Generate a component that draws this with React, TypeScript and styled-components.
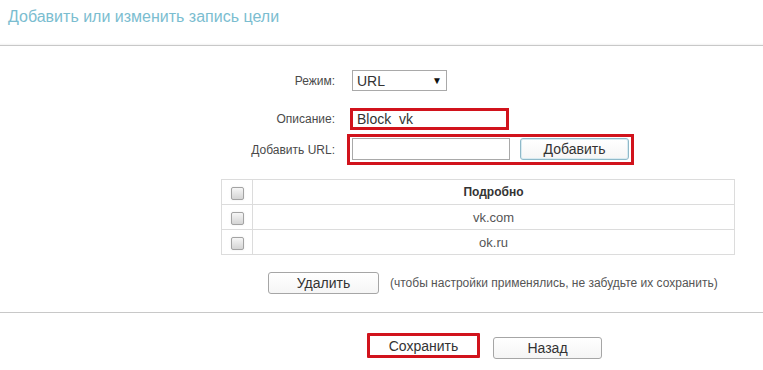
import styled, { createGlobalStyle } from 'styled-components';

const GlobalStyle = createGlobalStyle`
  html, body {
    margin: 0;
    padding: 0;
    background: #fff;
  }
  body {
    font-family: "Liberation Sans", Arial, sans-serif;
    color: #333;
  }
`;

const urls = ['vk.com', 'ok.ru'];

function App() {
  return (
    <>
      <GlobalStyle />
      <Page>
        <Header>
          <Title>Добавить или изменить запись цели</Title>
        </Header>

        <Form>
          <FormRow $top={24}>
            <Label>Режим:</Label>
            <Select $indent={5}>
              <span>URL</span>
              <Arrow>▼</Arrow>
            </Select>
          </FormRow>

          <FormRow $top={17}>
            <Label>Описание:</Label>
            <DescriptionBox $indent={3}>Block  vk</DescriptionBox>
          </FormRow>

          <FormRow $top={4}>
            <Label>Добавить URL:</Label>
            <UrlGroup>
              <TextInput />
              <Button $variant='focus'>Добавить</Button>
            </UrlGroup>
          </FormRow>
        </Form>

        <Table>
          <thead>
            <tr>
              <CheckCell>
                <Checkbox />
              </CheckCell>
              <HeadCell>Подробно</HeadCell>
            </tr>
          </thead>
          <tbody>
            {urls.map((url) => (
              <tr key={url}>
                <CheckCell>
                  <Checkbox />
                </CheckCell>
                <Cell>{url}</Cell>
              </tr>
            ))}
          </tbody>
        </Table>

        <DeleteRow>
          <Button $width={111}>Удалить</Button>
          <Hint>(чтобы настройки применялись, не забудьте их сохранить)</Hint>
        </DeleteRow>

        <Footer>
          <SaveButton>Сохранить</SaveButton>
          <Button $width={109} $offset={4}>Назад</Button>
        </Footer>
      </Page>
    </>
  );
}

const Page = styled.div`
  width: 763px;
  min-height: 370px;
  display: flex;
  flex-direction: column;
`;

const Header = styled.div`
  height: 46px;
  padding: 7px 0 0 8px;
  box-sizing: border-box;
  border-bottom: 1px solid #c8c8c8;
  box-shadow: 0 -3px 2px -2px #f2f2f2 inset;
`;

const Title = styled.h1`
  margin: 0;
  font-size: 16px;
  line-height: 20px;
  font-weight: 400;
  color: #7bbdd0;
`;

const Form = styled.div`
  display: flex;
  flex-direction: column;
`;

const FormRow = styled.div<{ $top: number }>`
  display: grid;
  grid-template-columns: 335px auto;
  column-gap: 12px;
  align-items: center;
  margin-top: ${(p) => p.$top}px;
`;

const Label = styled.label`
  text-align: right;
  font-size: 12px;
  color: #4a4a4a;
`;

const Select = styled.div<{ $indent: number }>`
  margin-left: ${(p) => p.$indent}px;
  width: 95px;
  height: 21px;
  box-sizing: border-box;
  border: 1px solid #a9a9a9;
  padding: 0 4px 0 4px;
  display: flex;
  align-items: center;
  justify-content: space-between;
  font-size: 14px;
  color: #333;
`;

const Arrow = styled.span`
  font-size: 10px;
  color: #111;
`;

const DescriptionBox = styled.div<{ $indent: number }>`
  margin-left: ${(p) => p.$indent}px;
  width: 159px;
  height: 22px;
  box-sizing: border-box;
  border: 3px solid #d1131c;
  padding: 0 4px;
  display: flex;
  align-items: center;
  font-size: 14px;
  color: #333;
  white-space: pre;
`;

const UrlGroup = styled.div`
  width: 287px;
  height: 31px;
  box-sizing: border-box;
  border: 3px solid #d1131c;
  padding: 1px 1px 0 2px;
  display: flex;
  align-items: flex-start;
  gap: 10px;
`;

const TextInput = styled.div`
  width: 158px;
  height: 22px;
  box-sizing: border-box;
  border: 1px solid #a9a9a9;
  background: #fff;
`;

const Button = styled.button<{ $width?: number; $offset?: number; $variant?: 'focus' }>`
  width: ${(p) => p.$width ?? 109}px;
  height: 22px;
  margin-top: ${(p) => p.$offset ?? 0}px;
  box-sizing: border-box;
  border: 1px solid ${(p) => (p.$variant === 'focus' ? '#8fb9c9' : '#a6a6a6')};
  border-radius: 3px;
  background: linear-gradient(#ffffff, #f5f5f5);
  box-shadow: ${(p) => (p.$variant === 'focus' ? 'inset 0 0 0 1px #d9ebf1' : 'none')};
  font-family: inherit;
  font-size: 14px;
  color: #333;
  padding: 0;
  cursor: pointer;
`;

const Table = styled.table`
  margin: 14px 0 0 221px;
  width: 514px;
  border-collapse: collapse;
  border: 1px solid #dcdcdc;
  font-size: 13px;
  color: #555;

  td, th {
    height: 24px;
    padding: 0;
    border: 1px solid #dcdcdc;
  }
`;

const CheckCell = styled.td`
  width: 30px;
  text-align: center;
  vertical-align: middle;
`;

const Checkbox = styled.span`
  display: inline-block;
  width: 11px;
  height: 11px;
  vertical-align: middle;
  border: 1px solid #a3a3a3;
  border-radius: 2px;
  background: linear-gradient(#f6f6f6, #d4d4d4);
  box-shadow: 0 0 2px #e6e6e6;
`;

const HeadCell = styled.th`
  font-weight: 700;
  font-size: 12px;
  color: #333;
  text-align: center;
`;

const Cell = styled.td`
  text-align: center;
`;

const DeleteRow = styled.div`
  margin-top: 17px;
  padding-left: 268px;
  display: flex;
  align-items: center;
  gap: 11px;
`;

const Hint = styled.span`
  font-size: 12px;
  color: #555;
`;

const Footer = styled.div`
  margin-top: 18px;
  border-top: 1px solid #c8c8c8;
  padding: 20px 0 0 367px;
  display: flex;
  align-items: flex-start;
  gap: 13px;
`;

const SaveButton = styled.button`
  width: 113px;
  height: 25px;
  box-sizing: border-box;
  border: 3px solid #d1131c;
  border-radius: 1px;
  background: #fff;
  font-family: inherit;
  font-size: 14px;
  color: #333;
  padding: 0;
  cursor: pointer;
`;

export default App;
